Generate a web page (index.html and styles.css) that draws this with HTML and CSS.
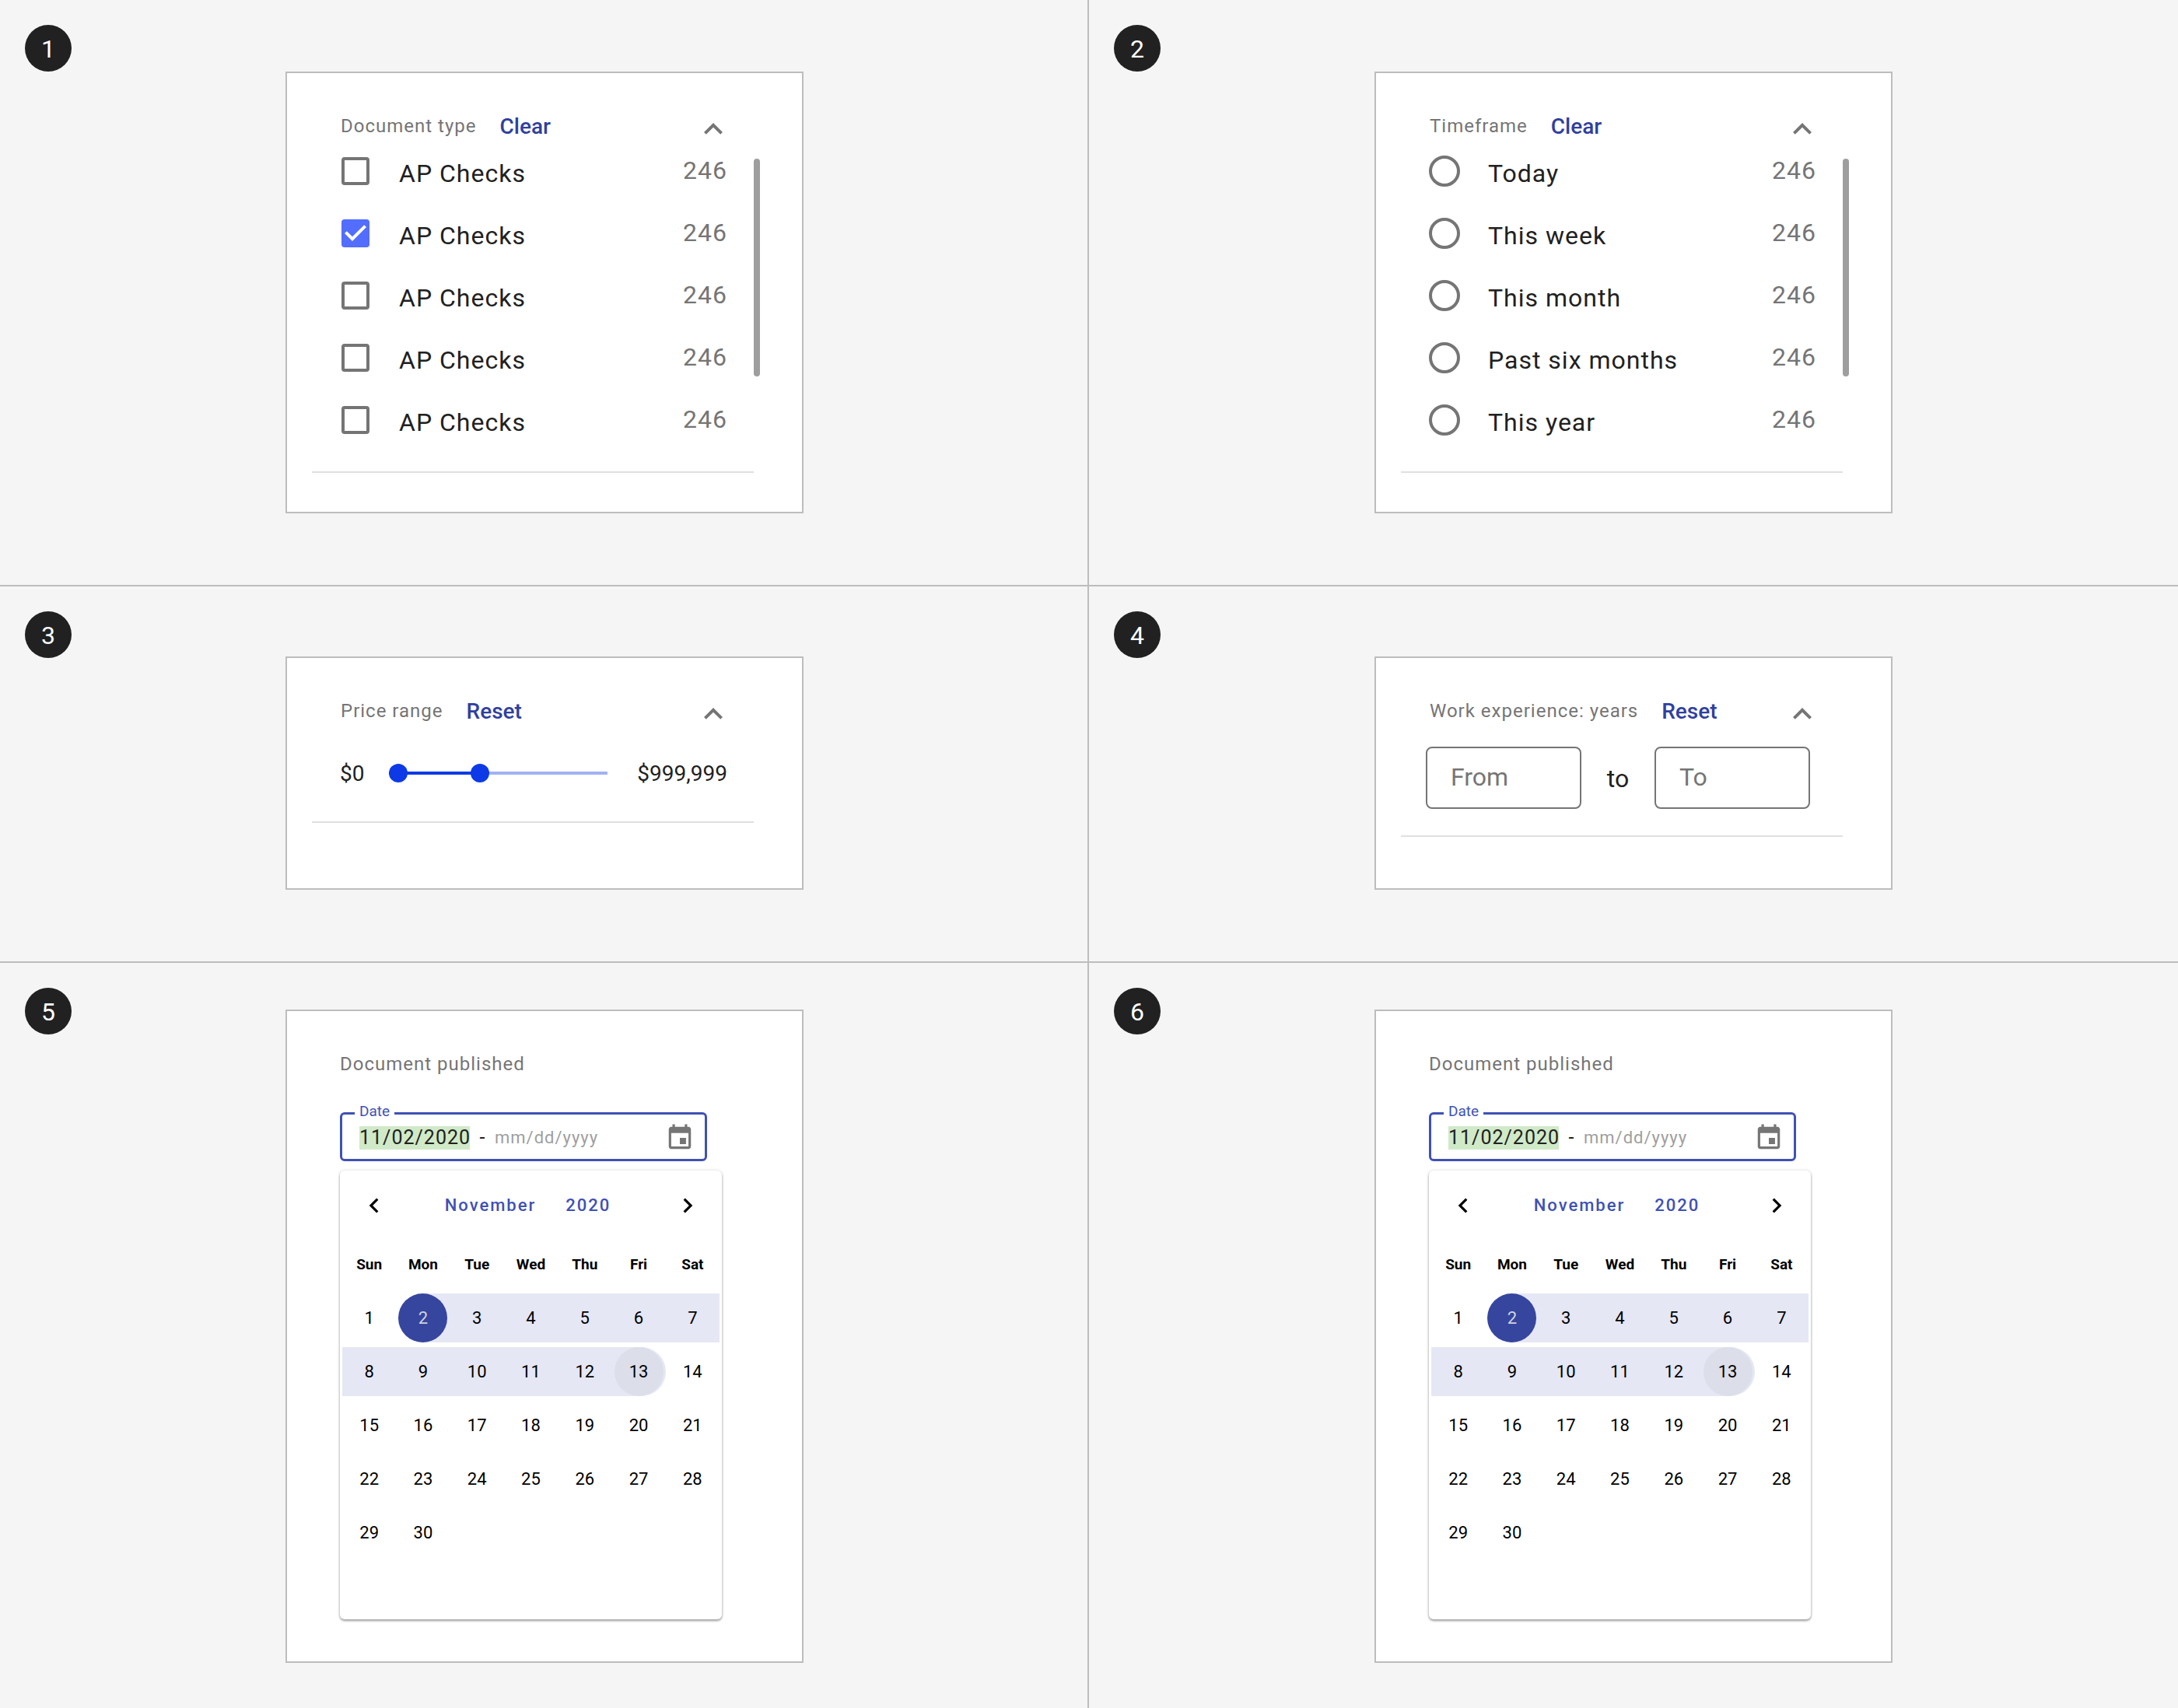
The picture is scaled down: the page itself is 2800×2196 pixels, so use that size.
FILE: index.html
```html
<!DOCTYPE html>
<html lang="en">
<head>
<meta charset="utf-8">
<meta name="viewport" content="width=device-width, initial-scale=1">
<title>Filter types</title>
<link rel="stylesheet" href="styles.css">
</head>
<body>
<svg class="sprite" aria-hidden="true">
  <symbol id="i-up" viewBox="0 0 24 24"><path d="M12 8l-6 6 1.41 1.41L12 10.83l4.59 4.58L18 14z"/></symbol>
  <symbol id="i-left" viewBox="0 0 24 24"><path d="M15.41 7.41L14 6l-6 6 6 6 1.41-1.41L10.83 12z"/></symbol>
  <symbol id="i-right" viewBox="0 0 24 24"><path d="M10 6L8.59 7.41 13.17 12l-4.58 4.59L10 18l6-6z"/></symbol>
  <symbol id="i-event" viewBox="0 0 24 24"><path d="M17 12h-5v5h5v-5zM16 1v2H8V1H6v2H5c-1.11 0-1.99.9-1.99 2L3 19c0 1.1.89 2 2 2h14c1.1 0 2-.9 2-2V5c0-1.1-.9-2-2-2h-1V1h-2zm3 18H5V8h14v11z"/></symbol>
</svg>

<main class="board">
  <section class="cell cell-list">
    <span class="badge">1</span>
    <div class="card card-list">
      <div class="filter">
        <header class="head">
          <h2 class="title">Document type</h2>
          <button class="action" type="button">Clear</button>
          <button class="toggle" type="button" aria-label="Collapse"><svg class="icon-lg"><use href="#i-up"/></svg></button>
        </header>
        <div class="scroller">
          <ul class="options">
            <li class="option"><input class="check" type="checkbox" id="doc1"><label class="name" for="doc1">AP Checks</label><span class="count">246</span></li>
            <li class="option"><input class="check" type="checkbox" id="doc2" checked><label class="name" for="doc2">AP Checks</label><span class="count">246</span></li>
            <li class="option"><input class="check" type="checkbox" id="doc3"><label class="name" for="doc3">AP Checks</label><span class="count">246</span></li>
            <li class="option"><input class="check" type="checkbox" id="doc4"><label class="name" for="doc4">AP Checks</label><span class="count">246</span></li>
            <li class="option"><input class="check" type="checkbox" id="doc5"><label class="name" for="doc5">AP Checks</label><span class="count">246</span></li>
          </ul>
          <div class="scroll-thumb"></div>
        </div>
      </div>
    </div>
  </section>

  <section class="cell cell-list">
    <span class="badge">2</span>
    <div class="card card-list">
      <div class="filter">
        <header class="head">
          <h2 class="title">Timeframe</h2>
          <button class="action" type="button">Clear</button>
          <button class="toggle" type="button" aria-label="Collapse"><svg class="icon-lg"><use href="#i-up"/></svg></button>
        </header>
        <div class="scroller">
          <ul class="options">
            <li class="option"><input class="radio" type="radio" name="time" id="time1"><label class="name" for="time1">Today</label><span class="count">246</span></li>
            <li class="option"><input class="radio" type="radio" name="time" id="time2"><label class="name" for="time2">This week</label><span class="count">246</span></li>
            <li class="option"><input class="radio" type="radio" name="time" id="time3"><label class="name" for="time3">This month</label><span class="count">246</span></li>
            <li class="option"><input class="radio" type="radio" name="time" id="time4"><label class="name" for="time4">Past six months</label><span class="count">246</span></li>
            <li class="option"><input class="radio" type="radio" name="time" id="time5"><label class="name" for="time5">This year</label><span class="count">246</span></li>
          </ul>
          <div class="scroll-thumb"></div>
        </div>
      </div>
    </div>
  </section>

  <section class="cell cell-range">
    <span class="badge">3</span>
    <div class="card card-price">
      <div class="filter">
        <header class="head">
          <h2 class="title">Price range</h2>
          <button class="action" type="button">Reset</button>
          <button class="toggle" type="button" aria-label="Collapse"><svg class="icon-lg"><use href="#i-up"/></svg></button>
        </header>
        <div class="price">
          <span>$0</span>
          <div class="slider" style="--to: 42%">
            <input class="range" type="range" min="0" max="999999" value="0" aria-label="Lowest price">
            <input class="range" type="range" min="0" max="999999" value="406250" aria-label="Highest price">
          </div>
          <span>$999,999</span>
        </div>
      </div>
    </div>
  </section>

  <section class="cell cell-range">
    <span class="badge">4</span>
    <div class="card card-years">
      <div class="filter">
        <header class="head">
          <h2 class="title">Work experience: years</h2>
          <button class="action" type="button">Reset</button>
          <button class="toggle" type="button" aria-label="Collapse"><svg class="icon-lg"><use href="#i-up"/></svg></button>
        </header>
        <div class="years">
          <input class="year" type="text" placeholder="From" aria-label="From">
          <span class="to">to</span>
          <input class="year" type="text" placeholder="To" aria-label="To">
        </div>
      </div>
    </div>
  </section>

  <section class="cell cell-date">
    <span class="badge">5</span>
    <div class="card card-date">
      <header class="head">
        <h2 class="title">Document published</h2>
      </header>
      <fieldset class="date-field">
        <legend class="legend">Date</legend>
        <div class="dates">
          <input class="date date-from" type="text" value="11/02/2020" aria-label="Start date">
          <span class="dash">-</span>
          <input class="date date-to" type="text" placeholder="mm/dd/yyyy" aria-label="End date">
          <button class="pick" type="button" aria-label="Open calendar"><svg class="icon-md"><use href="#i-event"/></svg></button>
        </div>
      </fieldset>
      <div class="calendar">
        <div class="month-bar">
          <button class="nav" type="button" aria-label="Previous month"><svg class="icon-md"><use href="#i-left"/></svg></button>
          <div class="month"><button class="period" type="button">November</button><button class="period" type="button">2020</button></div>
          <button class="nav" type="button" aria-label="Next month"><svg class="icon-md"><use href="#i-right"/></svg></button>
        </div>
        <table class="days">
          <thead><tr><th>Sun</th><th>Mon</th><th>Tue</th><th>Wed</th><th>Thu</th><th>Fri</th><th>Sat</th></tr></thead>
          <tbody>
            <tr><td><button class="day">1</button></td><td class="start"><button class="day day-start">2</button></td><td class="in"><button class="day">3</button></td><td class="in"><button class="day">4</button></td><td class="in"><button class="day">5</button></td><td class="in"><button class="day">6</button></td><td class="in"><button class="day">7</button></td></tr>
            <tr><td class="in"><button class="day">8</button></td><td class="in"><button class="day">9</button></td><td class="in"><button class="day">10</button></td><td class="in"><button class="day">11</button></td><td class="in"><button class="day">12</button></td><td class="in end"><button class="day day-end">13</button></td><td><button class="day">14</button></td></tr>
            <tr><td><button class="day">15</button></td><td><button class="day">16</button></td><td><button class="day">17</button></td><td><button class="day">18</button></td><td><button class="day">19</button></td><td><button class="day">20</button></td><td><button class="day">21</button></td></tr>
            <tr><td><button class="day">22</button></td><td><button class="day">23</button></td><td><button class="day">24</button></td><td><button class="day">25</button></td><td><button class="day">26</button></td><td><button class="day">27</button></td><td><button class="day">28</button></td></tr>
            <tr><td><button class="day">29</button></td><td><button class="day">30</button></td><td></td><td></td><td></td><td></td><td></td></tr>
          </tbody>
        </table>
      </div>
    </div>
  </section>

  <section class="cell cell-date">
    <span class="badge">6</span>
    <div class="card card-date">
      <header class="head">
        <h2 class="title">Document published</h2>
      </header>
      <fieldset class="date-field">
        <legend class="legend">Date</legend>
        <div class="dates">
          <input class="date date-from" type="text" value="11/02/2020" aria-label="Start date">
          <span class="dash">-</span>
          <input class="date date-to" type="text" placeholder="mm/dd/yyyy" aria-label="End date">
          <button class="pick" type="button" aria-label="Open calendar"><svg class="icon-md"><use href="#i-event"/></svg></button>
        </div>
      </fieldset>
      <div class="calendar">
        <div class="month-bar">
          <button class="nav" type="button" aria-label="Previous month"><svg class="icon-md"><use href="#i-left"/></svg></button>
          <div class="month"><button class="period" type="button">November</button><button class="period" type="button">2020</button></div>
          <button class="nav" type="button" aria-label="Next month"><svg class="icon-md"><use href="#i-right"/></svg></button>
        </div>
        <table class="days">
          <thead><tr><th>Sun</th><th>Mon</th><th>Tue</th><th>Wed</th><th>Thu</th><th>Fri</th><th>Sat</th></tr></thead>
          <tbody>
            <tr><td><button class="day">1</button></td><td class="start"><button class="day day-start">2</button></td><td class="in"><button class="day">3</button></td><td class="in"><button class="day">4</button></td><td class="in"><button class="day">5</button></td><td class="in"><button class="day">6</button></td><td class="in"><button class="day">7</button></td></tr>
            <tr><td class="in"><button class="day">8</button></td><td class="in"><button class="day">9</button></td><td class="in"><button class="day">10</button></td><td class="in"><button class="day">11</button></td><td class="in"><button class="day">12</button></td><td class="in end"><button class="day day-end">13</button></td><td><button class="day">14</button></td></tr>
            <tr><td><button class="day">15</button></td><td><button class="day">16</button></td><td><button class="day">17</button></td><td><button class="day">18</button></td><td><button class="day">19</button></td><td><button class="day">20</button></td><td><button class="day">21</button></td></tr>
            <tr><td><button class="day">22</button></td><td><button class="day">23</button></td><td><button class="day">24</button></td><td><button class="day">25</button></td><td><button class="day">26</button></td><td><button class="day">27</button></td><td><button class="day">28</button></td></tr>
            <tr><td><button class="day">29</button></td><td><button class="day">30</button></td><td></td><td></td><td></td><td></td><td></td></tr>
          </tbody>
        </table>
      </div>
    </div>
  </section>
</main>
</body>
</html>
```
FILE: styles.css
```css
*, *::before, *::after { box-sizing: border-box; }

:root {
  --page: #f5f5f5;
  --line: #bdbdbd;
  --rule: #e0e0e0;
  --muted: #757575;
  --ink: #212121;
  --indigo: #303f9f;
  --accent: #3f51b5;
  --slider: #0d3ae6;
  --band: #e5e7f5;
}

body {
  margin: 0;
  background: var(--page);
  color: var(--ink);
  font-family: Roboto, "Liberation Sans", sans-serif;
}

button, input { font: inherit; color: inherit; margin: 0; }
button { border: 0; padding: 0; background: none; cursor: pointer; }
svg { display: block; fill: currentColor; }

.sprite { position: absolute; width: 0; height: 0; }
.icon-lg { width: 48px; height: 48px; }
.icon-md { width: 38px; height: 38px; }

/* Board of numbered examples */
.board {
  display: grid;
  grid-template-columns: 1fr 1fr;
  min-height: 100vh;
  grid-template-rows: auto auto 1fr;
}

.cell { position: relative; border-bottom: 2px solid var(--line); }
.cell:nth-child(odd) { border-right: 2px solid var(--line); padding-left: 2px; }
.cell-list { padding-top: 92px; padding-bottom: 92px; }
.cell-range { padding-top: 90px; padding-bottom: 92px; }
.cell-date { padding-top: 60px; padding-bottom: 56px; border-bottom: 0; }

.badge {
  position: absolute;
  top: 32px;
  left: 32px;
  width: 60px;
  height: 60px;
  border-radius: 50%;
  background: var(--ink);
  color: #fff;
  font-size: 32px;
  line-height: 62px;
  text-align: center;
}

.card {
  width: 666px;
  max-width: 100%;
  margin: 0 auto;
  padding: 40px 62px 0 32px;
  border: 2px solid var(--line);
  background: #fff;
}
.card-list { padding-bottom: 50px; }
.card-price { padding-bottom: 84px; }
.card-years { padding-bottom: 66px; }
.card-date { padding: 40px 103px 54px 68px; }

.filter { border-bottom: 2px solid var(--rule); }

.head { display: flex; align-items: center; height: 56px; }
.filter .head { padding: 0 28px 0 37px; }
.title {
  margin: 0;
  color: var(--muted);
  font-size: 24px;
  font-weight: 400;
  line-height: 28px;
  letter-spacing: 1px;
}
.action { margin-left: 30px; padding-top: 2px; color: var(--indigo); font-size: 28px; font-weight: 500; line-height: 32px; }
.toggle { margin-left: auto; align-self: flex-end; color: var(--muted); }

/* Check and radio lists */
.scroller {
  display: flex;
  gap: 34px;
  margin: 10px -8px 0 36px;
  padding-bottom: 46px;
}
.options {
  flex: 1;
  display: flex;
  flex-direction: column;
  gap: 40px;
  margin: 0;
  padding: 0;
  list-style: none;
}
.option { display: flex; align-items: center; height: 40px; font-size: 32px; line-height: 34px; letter-spacing: 1px; }
.name { flex: 1; padding: 6px 0 0 36px; }
.count { padding-bottom: 2px; color: var(--muted); }

.check, .radio { appearance: none; flex: none; border: 4px solid var(--muted); background: #fff; }
.check { width: 36px; height: 36px; margin: 0 2px; border-radius: 4px; }
.check:checked {
  border: 0;
  background: #536dfe url("data:image/svg+xml,%3Csvg xmlns='http://www.w3.org/2000/svg' viewBox='3 3 18 18'%3E%3Cpath fill='%23fff' d='M10 17l-5-5 1.41-1.41L10 14.17l7.59-7.59L19 8z'/%3E%3C/svg%3E") center / 36px 36px;
}
.radio { width: 40px; height: 40px; border-radius: 50%; }
.scroll-thumb { width: 8px; height: 280px; margin-top: 4px; border-radius: 4px; background: #9e9e9e; }

/* Price slider */
.price {
  display: flex;
  align-items: center;
  gap: 32px;
  height: 40px;
  margin: 32px 34px 42px 36px;
  font-size: 28px;
}
.slider {
  flex: 1;
  display: grid;
  margin-right: 6px;
  background: linear-gradient(to right, var(--slider) var(--to), #a0b1f4 var(--to)) center / 100% 4px no-repeat;
}
.range {
  grid-area: 1 / 1;
  appearance: none;
  width: 100%;
  height: 24px;
  background: none;
  pointer-events: none;
}
.range::-webkit-slider-thumb {
  appearance: none;
  width: 24px;
  height: 24px;
  border-radius: 50%;
  background: var(--slider);
  pointer-events: auto;
}

/* Years of experience */
.years { display: flex; align-items: center; margin: 18px 42px 34px 32px; font-size: 32px; }
.year {
  flex: 1;
  min-width: 0;
  height: 80px;
  padding: 0 30px 2px;
  border: 2px solid var(--muted);
  border-radius: 8px;
  background: #fff;
}
.year::placeholder { color: var(--muted); opacity: 1; }
.to { width: 94px; padding-top: 2px; text-align: center; }

/* Date field */
.date-field {
  min-width: 0;
  margin: 22px 19px 12px 0;
  padding: 0 13px 9px 16px;
  border: 3px solid var(--accent);
  border-radius: 6px;
}
.legend { padding: 0 6px 4px; color: var(--accent); font-size: 19px; line-height: 22px; }
.dates { display: flex; align-items: center; height: 37px; padding-left: 6px; }
.date { height: 30px; padding: 0; border: 0; background: none; letter-spacing: 1px; }
.date-from { width: 142px; background: #d0eac8; font-size: 25px; }
.dash { width: 32px; font-size: 25px; text-align: center; }
.date-to { flex: 1; min-width: 0; font-size: 22px; }
.date-to::placeholder { color: #9e9e9e; opacity: 1; }
.pick { color: var(--muted); }

/* Calendar */
.calendar {
  padding: 26px 3px 74px;
  border-radius: 6px;
  background: #fff;
  box-shadow: 0 2px 3px rgba(0, 0, 0, 0.35), 0 0 4px rgba(0, 0, 0, 0.14);
}
.month-bar { display: flex; align-items: center; padding: 0 22px; }
.nav { color: #000; }
.month { flex: 1; display: flex; justify-content: center; gap: 38px; padding-right: 8px; }
.period { color: var(--accent); font-size: 22px; font-weight: 500; line-height: 26px; letter-spacing: 2px; }

.days {
  width: 100%;
  margin-top: 19px;
  border-spacing: 0 6px;
  table-layout: fixed;
  color: #000;
  font-size: 22px;
}
.days th { height: 63px; padding: 0; font-size: 19px; font-weight: 700; }
.days td { height: 63px; padding: 0; text-align: center; }
.days .in { background: var(--band); }
.days .start { background: linear-gradient(to right, transparent 50%, var(--band) 50%); }
.days .end { border-radius: 0 32px 32px 0; }
.day { display: block; width: 63px; height: 63px; margin: 0 auto; border-radius: 50%; }
.day-start { background: #36469e; color: #d2d3dc; }
.day-end { background: #dcdeea; }

@media (max-width: 1400px) {
  .board { grid-template-columns: 1fr; }
  .cell { padding-top: 112px; }
  .cell:nth-child(odd) { border-right: 0; padding-left: 0; }
}
```
